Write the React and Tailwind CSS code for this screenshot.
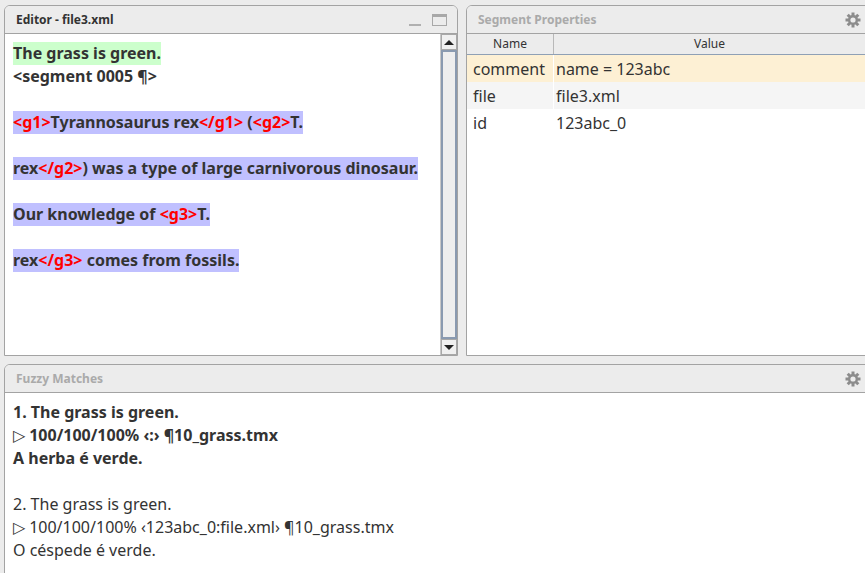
import React from "react";

const Tag = ({ children }) => <span className="text-[#ff0000]">{children}</span>;

function Gear() {
    const teeth = [0, 45, 90, 135, 180, 225, 270, 315];
    return (
        <svg width="16" height="16" viewBox="0 0 16 16" className="text-[#8c8c8c]">
            {teeth.map(a => (
                <rect key={a} x="6.5" y="0.5" width="3" height="4" fill="currentColor" transform={`rotate(${a} 8 8)`} />
            ))}
            <circle cx="8" cy="8" r="5" fill="currentColor" />
            <circle cx="8" cy="8" r="2.6" fill="#ececec" />
        </svg>
    );
}

function PanelHeader({ title, active, children }) {
    return (
        <div className="h-[28px] flex items-center justify-between border-b border-[#a3a3a3] bg-[#ececec] pl-[11px] pr-[10px] rounded-t-[5px]">
            <span className={"text-[12px] font-bold " + (active ? "text-[#333]" : "text-[#aaaaaa]")}>{title}</span>
            {children}
        </div>
    );
}

function Line({ hl, children }) {
    return (
        <div className="h-[23px] leading-[23px] whitespace-nowrap">
            {children ? <span className={"inline-block h-[23px] " + (hl || "")}>{children}</span> : null}
        </div>
    );
}

function Scrollbar() {
    return (
        <div className="w-[17px] flex flex-col bg-[#ececec] border-l border-[#c8c8c8]">
            <div className="h-[16px] flex items-center justify-center border border-[#a8a8a8] bg-[#f0f0f0]">
                <div className="w-0 h-0 border-l-[5px] border-r-[5px] border-b-[5px] border-l-transparent border-r-transparent border-b-[#222]" />
            </div>
            <div className="flex-1 border-2 border-[#8a9ab0] bg-[#eeeeee]" />
            <div className="h-[16px] flex items-center justify-center border border-[#a8a8a8] bg-[#f0f0f0]">
                <div className="w-0 h-0 border-l-[5px] border-r-[5px] border-t-[5px] border-l-transparent border-r-transparent border-t-[#222]" />
            </div>
        </div>
    );
}

export default function App() {
    const props = [
        { name: "comment", value: "name = 123abc", bg: "bg-[#fdf0d4]" },
        { name: "file", value: "file3.xml", bg: "bg-[#f5f5f5]" },
        { name: "id", value: "123abc_0", bg: "bg-white" },
    ];

    return (
        <div
            className="w-[865px] h-[573px] overflow-hidden bg-[#ececec] pl-[4px] pt-[5px] text-[#333] flex flex-col gap-[8px]"
            style={{ fontFamily: '"Noto Sans", sans-serif' }}
        >
            <div className="flex gap-[8px] h-[351px] shrink-0">
                {/* Editor */}
                <div className="w-[454px] shrink-0 flex flex-col border border-[#a3a3a3] rounded-t-[6px] bg-white">
                    <PanelHeader title="Editor - file3.xml" active>
                        <div className="flex items-center gap-[11px]">
                            <div className="w-[12px] h-[2px] bg-[#b0b0b0] mt-[10px]" />
                            <div className="w-[15px] h-[12px] border border-[#a8a8a8] border-t-[3px]" />
                        </div>
                    </PanelHeader>
                    <div className="flex-1 flex min-h-0">
                        <div className="flex-1 pt-[8px] pl-[8px] text-[16px] font-bold text-[#333] overflow-hidden">
                            <Line hl="bg-[#ccffcc]">The grass is green.</Line>
                            <Line hl="">{"<segment 0005 ¶>"}</Line>
                            <Line />
                            <Line hl="bg-[#c0c0ff]">
                                <Tag>{"<g1>"}</Tag>Tyrannosaurus rex<Tag>{"</g1>"}</Tag> (<Tag>{"<g2>"}</Tag>T.
                            </Line>
                            <Line />
                            <Line hl="bg-[#c0c0ff]">
                                rex<Tag>{"</g2>"}</Tag>) was a type of large carnivorous dinosaur.
                            </Line>
                            <Line />
                            <Line hl="bg-[#c0c0ff]">
                                Our knowledge of <Tag>{"<g3>"}</Tag>T.
                            </Line>
                            <Line />
                            <Line hl="bg-[#c0c0ff]">
                                rex<Tag>{"</g3>"}</Tag> comes from fossils.
                            </Line>
                        </div>
                        <Scrollbar />
                    </div>
                </div>

                {/* Segment Properties */}
                <div className="w-[420px] shrink-0 flex flex-col border border-[#a3a3a3] rounded-t-[6px] bg-white">
                    <PanelHeader title="Segment Properties">
                        <div className="mr-[14px]">
                            <Gear />
                        </div>
                    </PanelHeader>
                    <div className="flex-1">
                        <div className="flex h-[21px] bg-[#ececec] border-b border-[#8fa0b5] text-[12px] text-[#333]">
                            <div className="w-[87px] flex items-center justify-center border-r border-[#b8b8b8]">Name</div>
                            <div className="w-[311px] flex items-center justify-center">Value</div>
                        </div>
                        {props.map(p => (
                            <div key={p.name} className={"flex h-[27px] items-center text-[16px] " + p.bg}>
                                <div className="w-[87px] pl-[6px] h-full flex items-center border-r border-white">{p.name}</div>
                                <div className="flex-1 pl-[2px]">{p.value}</div>
                            </div>
                        ))}
                    </div>
                </div>
            </div>

            {/* Fuzzy Matches */}
            <div className="w-[880px] h-[230px] shrink-0 flex flex-col border border-[#a3a3a3] rounded-t-[6px] bg-white">
                <PanelHeader title="Fuzzy Matches">
                    <div className="mr-[12px]">
                        <Gear />
                    </div>
                </PanelHeader>
                <div className="pt-[8px] pl-[8px] text-[16px] text-[#333]">
                    <Line><span className="font-bold">1. The grass is green.</span></Line>
                    <Line>▷ <span className="font-bold">100/100/100% ‹:› ¶10_grass.tmx</span></Line>
                    <Line><span className="font-bold">A herba é verde.</span></Line>
                    <Line />
                    <Line>2. The grass is green.</Line>
                    <Line>▷ 100/100/100% ‹123abc_0:file.xml› ¶10_grass.tmx</Line>
                    <Line>O céspede é verde.</Line>
                </div>
            </div>
        </div>
    );
}
